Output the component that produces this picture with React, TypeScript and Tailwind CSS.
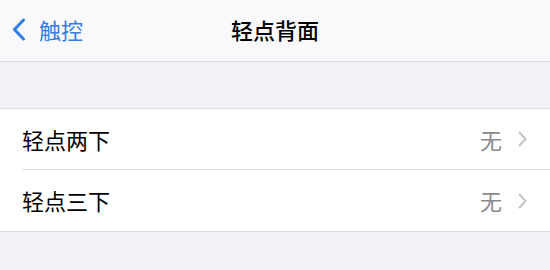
import React from 'react';

const font = { fontFamily: '"Noto Sans CJK SC", "Noto Sans", sans-serif' };

const Row = ({ label, value, last }: { label: string; value: string; last?: boolean }) => (
  <div className="flex h-[61px] items-center pl-[22px]">
    <div className={`flex h-full flex-1 items-center pr-[23px] ${last ? '' : 'border-b border-[#dcdce0]'}`}>
      <span className="flex-1 text-[22px] text-black">{label}</span>
      <span className="mr-[16px] text-[22px] text-[#8a8a8e]">{value}</span>
      <svg width="9" height="16" viewBox="0 0 9 16" fill="none">
        <path d="M1.5 1.5L7.5 8L1.5 14.5" stroke="#c4c4c8" strokeWidth="2" strokeLinecap="round" strokeLinejoin="round" />
      </svg>
    </div>
  </div>
);

export default function App() {
  return (
    <div className="flex h-[270px] w-[550px] flex-col bg-[#f2f2f7]" style={font}>
      {/* Nav bar */}
      <header className="relative flex h-[62px] items-center justify-center border-b border-[#dadadc] bg-[#f9f9fb]">
        <div className="absolute left-[12px] top-0 flex h-full items-center gap-[13px] pb-[2px]">
          <svg width="14" height="23" viewBox="0 0 14 23" fill="none">
            <path d="M11.5 2L2.5 11.5L11.5 21" stroke="#2f7ee6" strokeWidth="3" strokeLinecap="round" strokeLinejoin="round" />
          </svg>
          <span className="text-[22px] text-[#2f7ee6]">触控</span>
        </div>
        <span className="pb-[2px] text-[22px] font-medium text-black">轻点背面</span>
      </header>

      <div className="h-[46px]" />

      {/* Group */}
      <div className="border-y border-[#dcdce0] bg-white">
        <Row label="轻点两下" value="无" />
        <Row label="轻点三下" value="无" last />
      </div>
    </div>
  );
}
